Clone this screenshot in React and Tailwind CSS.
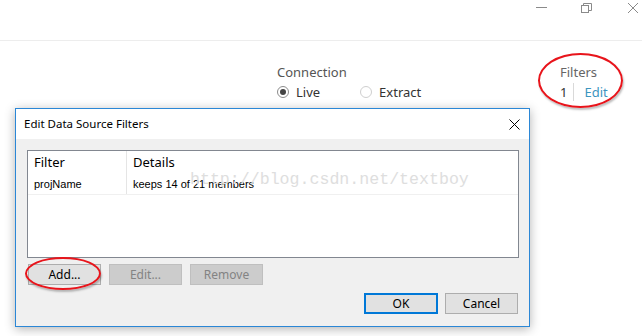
import React from "react";

const WinButton = ({ children, disabled, primary }) => (
  <button
    className={
      disabled
        ? "w-[73px] h-[21px] bg-[#cccccc] border border-[#bfbfbf] text-[#838383] text-[12px] leading-none"
        : primary
        ? "w-[74px] h-[21px] bg-[#e1e1e1] border-2 border-[#0078d7] text-black text-[12px] leading-none"
        : "w-[73px] h-[21px] bg-[#e1e1e1] border border-[#adadad] text-black text-[12px] leading-none"
    }
  >
    {children}
  </button>
);

const App = () => {
  return (
    <div className="relative w-[642px] h-[336px] overflow-hidden bg-white font-['Noto_Sans',sans-serif]">
      {/* window chrome */}
      <div className="h-[41px] border-b border-[#ededed] flex items-start">
        <div className="ml-[536px] mt-[7px] w-[11px] h-px bg-[#8a8a8a]" />
        <svg className="ml-[34px] mt-[3px]" width="11" height="10" viewBox="0 0 11 10" fill="none" stroke="#8a8a8a">
          <rect x="0.5" y="2.5" width="7" height="7" />
          <path d="M2.5 2.5V0.5H10.5V7.5H7.5" />
        </svg>
        <svg className="ml-[36px] mt-[3px]" width="10" height="10" viewBox="0 0 10 10" stroke="#8a8a8a">
          <path d="M0 0L10 10M10 0L0 10" />
        </svg>
      </div>

      {/* data source header */}
      <div className="h-[67px] flex items-start pt-[23px] text-[13px]">
        <div className="ml-[277px] w-[283px]">
          <div className="text-[#555555] leading-[16px]">Connection</div>
          <div className="flex items-center mt-[3px] leading-[18px]">
            <span className="w-[12px] h-[12px] rounded-full border border-[#8c8c8c] flex items-center justify-center">
              <span className="w-[6px] h-[6px] rounded-full bg-[#444444]" />
            </span>
            <span className="ml-[7px] text-[#333333]">Live</span>
            <span className="ml-[40px] w-[12px] h-[12px] rounded-full border border-[#cfcfcf]" />
            <span className="ml-[7px] text-[#333333]">Extract</span>
          </div>
        </div>
        <div>
          <div className="text-[#666666] leading-[16px]">Filters</div>
          <div className="flex items-center mt-[3px] leading-[18px]">
            <span className="text-[#333333]">1</span>
            <span className="ml-[6px] w-px h-[18px] bg-[#d9d9d9]" />
            <span className="ml-[10px] text-[#3d95bf]">Edit</span>
          </div>
        </div>
      </div>

      {/* dialog */}
      <div className="ml-[15px] w-[515px] h-[219px] border border-[#2b87d6] bg-[#f0f0f0] flex flex-col shadow-[0_2px_10px_rgba(0,0,0,0.3)]">
        <div className="h-[30px] bg-white flex items-center justify-between pl-[8px] pr-[9px]">
          <span className="text-[11.5px] text-black">Edit Data Source Filters</span>
          <svg width="11" height="11" viewBox="0 0 11 11" stroke="#000" strokeWidth="1">
            <path d="M0.5 0.5L10.5 10.5M10.5 0.5L0.5 10.5" />
          </svg>
        </div>
        <div className="flex-1 px-[11px] pt-[11px] pb-[12px] flex flex-col">
          <div className="w-[492px] h-[108px] bg-white border border-[#828790] flex flex-col">
            <div className="flex h-[44px] border-b border-[#f0f0f0]">
              <div className="w-[99px] border-r border-[#e5e5e5] pl-[6px] flex flex-col">
                <div className="h-[24px] flex items-center text-[13px] text-black">Filter</div>
                <div className="h-[20px] flex items-center text-[11px] text-black font-['Liberation_Sans',sans-serif]">projName</div>
              </div>
              <div className="flex-1 pl-[6px] flex flex-col">
                <div className="h-[24px] flex items-center text-[13px] text-black">Details</div>
                <div className="h-[20px] flex items-center text-[11px] text-black font-['Liberation_Sans',sans-serif]">
                  keeps 14 of 21 members
                </div>
              </div>
            </div>
          </div>
          <div className="flex gap-[8px] mt-[6px] ml-[1px]">
            <WinButton>Add...</WinButton>
            <WinButton disabled>Edit...</WinButton>
            <WinButton disabled>Remove</WinButton>
          </div>
          <div className="flex justify-end gap-[7px] mt-[8px]">
            <WinButton primary>OK</WinButton>
            <WinButton>Cancel</WinButton>
          </div>
        </div>
      </div>

      {/* watermark */}
      <div className="absolute left-[190px] top-[169px] text-[16.6px] leading-[22px] text-[#dedede] font-['Liberation_Mono',monospace]">
        http://blog.csdn.net/textboy
      </div>

      {/* annotation ellipses */}
      <div className="absolute left-[538px] top-[53px] w-[85px] h-[55px] rounded-[50%] border-2 border-[#e8141b] shadow-[1px_2px_2px_rgba(0,0,0,0.25)]" />
      <div className="absolute left-[25px] top-[257px] w-[76px] h-[33px] rounded-[50%] border-2 border-[#e8141b] shadow-[1px_2px_2px_rgba(0,0,0,0.25)]" />
    </div>
  );
};

export default App;
